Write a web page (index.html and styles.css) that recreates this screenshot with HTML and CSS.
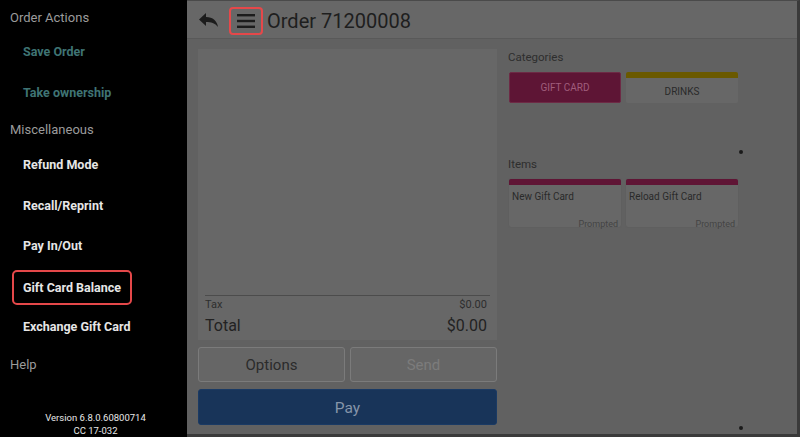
FILE: index.html
```html
<!DOCTYPE html>
<html lang="en">
<head>
  <meta charset="UTF-8">
  <title>Order 71200008</title>
  <link rel="stylesheet" href="styles.css">
</head>
<body>
  <div class="app">
    <nav class="menu">
      <div class="section first">Order Actions</div>
      <div class="item muted">Save Order</div>
      <div class="item muted">Take ownership</div>
      <div class="section">Miscellaneous</div>
      <div class="item">Refund Mode</div>
      <div class="item">Recall/Reprint</div>
      <div class="item">Pay In/Out</div>
      <div class="item"><span class="marked">Gift Card Balance</span></div>
      <div class="item">Exchange Gift Card</div>
      <div class="section">Help</div>
      <div class="version">Version 6.8.0.60800714<br>CC 17-032</div>
    </nav>

    <main class="main">
      <header class="topbar">
        <svg class="back" width="22" height="16" viewBox="0 0 22 16">
          <path d="M8 1 L1 7.5 L8 14 L8 10 C13 10 17 11 20 15 C19 9 15 5 8 5 Z" fill="#1c1c1c"/>
        </svg>
        <span class="burger-box">
          <svg width="18" height="14" viewBox="0 0 18 14">
            <rect x="0" y="0" width="18" height="2.4" fill="#1c1c1c"/>
            <rect x="0" y="5.8" width="18" height="2.4" fill="#1c1c1c"/>
            <rect x="0" y="11.6" width="18" height="2.4" fill="#1c1c1c"/>
          </svg>
        </span>
        <h1>Order 71200008</h1>
      </header>

      <div class="content">
        <div class="order-col">
          <div class="ticket">
            <div class="lines"></div>
            <div class="totals">
              <div class="row small"><span>Tax</span><span>$0.00</span></div>
              <div class="row big"><span>Total</span><span>$0.00</span></div>
            </div>
          </div>
          <div class="actions">
            <button class="btn">Options</button>
            <button class="btn disabled">Send</button>
          </div>
          <button class="pay">Pay</button>
        </div>

        <div class="catalog">
          <div class="label">Categories</div>
          <div class="tiles">
            <div class="cat active">GIFT CARD</div>
            <div class="cat drinks">DRINKS</div>
          </div>
          <div class="label items-label">Items</div>
          <div class="tiles">
            <div class="prod"><span class="name">New Gift Card</span><span class="note">Prompted</span></div>
            <div class="prod"><span class="name">Reload Gift Card</span><span class="note">Prompted</span></div>
          </div>
          <span class="dot dot-top"></span>
          <span class="dot dot-bottom"></span>
        </div>
      </div>
    </main>
  </div>
</body>
</html>
```

FILE: styles.css
```css
body {
  margin: 0;
  font-family: Roboto, "Noto Sans", Arial, sans-serif;
  background: #000;
}
.app {
  display: flex;
  width: 800px;
  height: 437px;
  overflow: hidden;
}
.menu {
  width: 187px;
  background: #000;
  display: flex;
  flex-direction: column;
  flex-shrink: 0;
}
.section {
  color: #9b9b9b;
  font-size: 13px;
  height: 32px;
  line-height: 28px;
  padding-left: 10px;
}
.section.first {
  margin-top: 3px;
  line-height: 30px;
}
.item {
  color: #e6e6e6;
  font-size: 12.5px;
  font-weight: bold;
  height: 40.5px;
  line-height: 34px;
  padding-left: 23px;
}
.item.muted {
  color: #3f7474;
}
.marked {
  display: inline-block;
  margin-left: -11px;
  padding: 0 9px;
  line-height: 31px;
  border: 2px solid #e5484a;
  border-radius: 5px;
}
.version {
  margin-top: auto;
  margin-bottom: 0;
  text-align: center;
  color: #e8e8e8;
  font-size: 9.5px;
  line-height: 13px;
  padding-left: 4px;
}
.main {
  flex: 1;
  background: #616161;
  border-top: 1px solid #4a4a4a;
  border-right: 3px solid #3a3a3a;
  border-bottom: 3px solid #3a3a3a;
  display: flex;
  flex-direction: column;
}
.topbar {
  height: 37px;
  background: #676767;
  border-bottom: 1px solid #595959;
  display: flex;
  align-items: center;
  padding-left: 11px;
}
.burger-box {
  margin-left: 9px;
  width: 30px;
  height: 24px;
  border: 2px solid #e5484a;
  border-radius: 4px;
  display: flex;
  align-items: center;
  justify-content: center;
  margin-top: 2px;
}
.topbar h1 {
  margin: 2px 0 0 4px;
  font-size: 20px;
  font-weight: normal;
  color: #1e1e1e;
}
.content {
  flex: 1;
  display: flex;
  padding: 10px 0 0 11px;
  position: relative;
}
.order-col {
  width: 299px;
  display: flex;
  flex-direction: column;
}
.ticket {
  height: 291px;
  background: #676767;
  display: flex;
  flex-direction: column;
}
.lines {
  flex: 1;
}
.totals {
  margin: 0 7px;
  border-top: 1px solid #4c4c4c;
  padding-bottom: 2px;
}
.row {
  display: flex;
  justify-content: space-between;
  color: #222;
  padding-right: 3px;
}
.row.small {
  font-size: 11px;
  color: #2e2e2e;
  line-height: 16px;
  padding-top: 1px;
}
.row.big {
  font-size: 16px;
  line-height: 25px;
}
.actions {
  display: flex;
  gap: 5px;
  margin-top: 7px;
}
.btn {
  flex: 1;
  height: 35px;
  background: #666;
  border: 1px solid #7b7b7b;
  border-radius: 3px;
  font-family: inherit;
  font-size: 15px;
  color: #2b2b2b;
}
.btn.disabled {
  color: #7c7c7c;
}
.pay {
  margin-top: 7px;
  height: 36px;
  padding-top: 2px;
  background: #183459;
  border: 1px solid #1a3a64;
  border-radius: 3px;
  font-family: inherit;
  font-size: 15.5px;
  color: #8695a9;
}
.catalog {
  margin-left: 11px;
  width: 240px;
}
.label {
  color: #2e2e2e;
  font-size: 11.5px;
  line-height: 16px;
}
.items-label {
  margin-top: 53px;
}
.tiles {
  display: flex;
  gap: 5px;
  margin-top: 7px;
  padding-left: 1px;
}
.cat {
  width: 112px;
  height: 31px;
  box-sizing: border-box;
  border-radius: 2px;
  font-size: 10px;
  text-align: center;
  color: #2a2a2a;
  background: #676767;
  line-height: 31px;
}
.cat.active {
  background: #5e1535;
  color: #a05d7c;
  border: 1px solid #6d2a45;
  line-height: 29px;
}
.cat.drinks {
  border-top: 6px solid #6a5900;
  line-height: 27px;
}
.prod {
  width: 112px;
  height: 48px;
  box-sizing: border-box;
  border-top: 6px solid #5f1535;
  border-radius: 2px;
  background: #676767;
  display: flex;
  flex-direction: column;
  justify-content: space-between;
  padding: 5px 3px 0 3px;
  box-shadow: 0 0 1px #555;
}
.prod .name {
  font-size: 10px;
  line-height: 13px;
  color: #2a2a2a;
}
.prod .note {
  align-self: flex-end;
  font-size: 9px;
  line-height: 8px;
  margin-bottom: -1px;
  color: #444;
}
.dot {
  position: absolute;
  width: 4px;
  height: 4px;
  border-radius: 50%;
  background: #1a1a1a;
}
.dot-top {
  left: 552px;
  top: 111px;
}
.dot-bottom {
  left: 552px;
  top: 387px;
}
```
